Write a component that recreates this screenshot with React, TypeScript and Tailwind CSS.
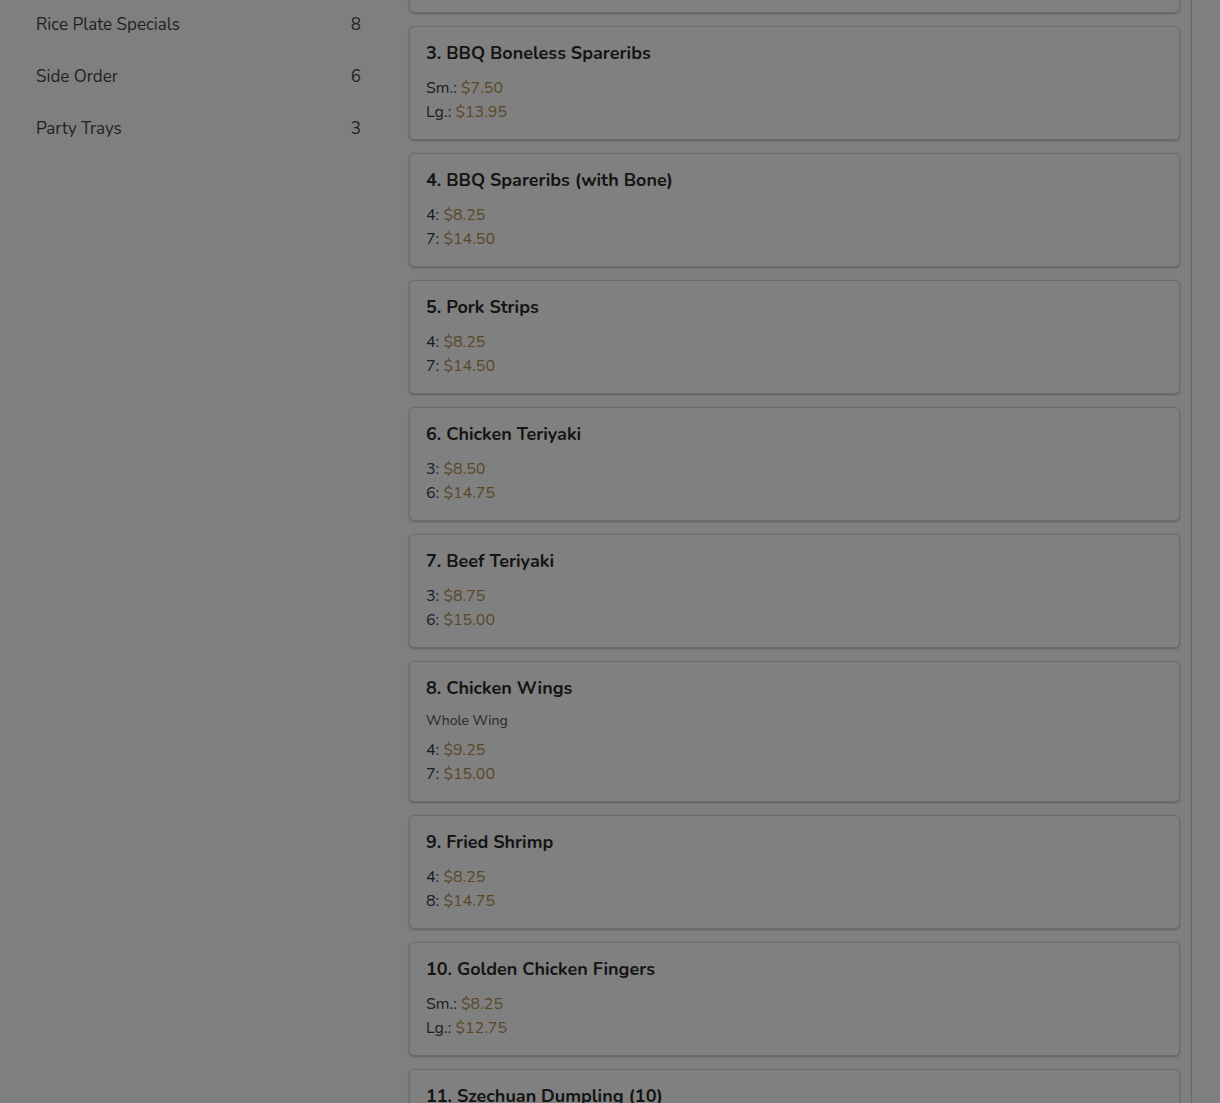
const CATEGORIES = [
  { name: "Rice Plate Specials", count: 8 },
  { name: "Side Order", count: 6 },
  { name: "Party Trays", count: 3 },
];

type Item = {
  title: string;
  note?: string;
  prices: [string, string][];
};

const ITEMS: Item[] = [
  { title: "3. BBQ Boneless Spareribs", prices: [["Sm.", "$7.50"], ["Lg.", "$13.95"]] },
  { title: "4. BBQ Spareribs (with Bone)", prices: [["4", "$8.25"], ["7", "$14.50"]] },
  { title: "5. Pork Strips", prices: [["4", "$8.25"], ["7", "$14.50"]] },
  { title: "6. Chicken Teriyaki", prices: [["3", "$8.50"], ["6", "$14.75"]] },
  { title: "7. Beef Teriyaki", prices: [["3", "$8.75"], ["6", "$15.00"]] },
  { title: "8. Chicken Wings", note: "Whole Wing", prices: [["4", "$9.25"], ["7", "$15.00"]] },
  { title: "9. Fried Shrimp", prices: [["4", "$8.25"], ["8", "$14.75"]] },
  { title: "10. Golden Chicken Fingers", prices: [["Sm.", "$8.25"], ["Lg.", "$12.75"]] },
  { title: "11. Szechuan Dumpling (10)", prices: [["Sm.", "$8.25"], ["Lg.", "$12.75"]] },
];

function MenuCard({ item }: { item: Item }) {
  return (
    <div className="rounded-[5px] border border-[#6c6c6c] bg-[#808080] px-4 pt-[14px] pb-[15px] shadow-[0_1px_2px_rgba(0,0,0,0.25)]">
      <h3 className="text-[18px] leading-6 font-bold text-[#141414]">{item.title}</h3>
      {item.note && (
        <p className="mt-[11px] text-[14px] leading-5 text-[#262626]">{item.note}</p>
      )}
      <div className={item.note ? "mt-[7px]" : "mt-[11px]"}>
        {item.prices.map(([label, price]) => (
          <div key={label} className="text-[16px] leading-6 text-[#1c1c1c]">
            {label}: <span className="text-[#5b4727]">{price}</span>
          </div>
        ))}
      </div>
    </div>
  );
}

export default function App() {
  return (
    <div
      className="h-[1103px] overflow-hidden bg-[#7f7f7f]"
      style={{ fontFamily: '"Nunito", Lato, "Open Sans", sans-serif' }}
    >
      <div className="flex">
        {/* Sidebar */}
        <aside className="w-[409px] shrink-0 pl-9 pr-12">
          <ul className="flex flex-col">
            {CATEGORIES.map((c, i) => (
              <li
                key={c.name}
                className={`flex justify-between text-[17px] leading-6 text-[#1f1f1f] ${i === 0 ? "pt-[13px]" : "pt-7"}`}
              >
                <span>{c.name}</span>
                <span>{c.count}</span>
              </li>
            ))}
          </ul>
        </aside>

        {/* Menu items */}
        <main className="w-[771px] shrink-0 -mt-[101px] flex flex-col gap-[13px]">
          <div className="h-[114px] shrink-0 rounded-[5px] border border-[#6c6c6c] shadow-[0_1px_2px_rgba(0,0,0,0.25)]" />
          {ITEMS.map((item) => (
            <MenuCard key={item.title} item={item} />
          ))}
        </main>

        <div className="ml-[11px] w-px shrink-0 self-stretch bg-[#676767]" />
      </div>
    </div>
  );
}
